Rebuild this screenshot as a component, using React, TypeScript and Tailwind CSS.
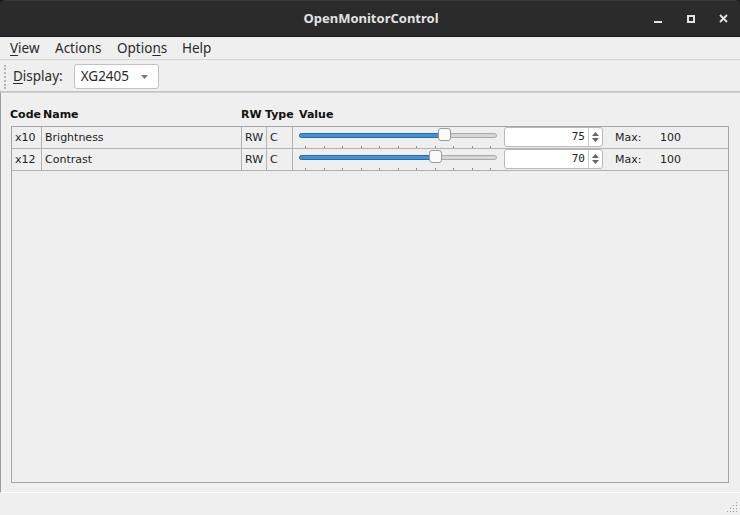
import React from "react";

interface Control {
  code: string;
  name: string;
  rw: string;
  type: string;
  value: number;
  max: number;
}

const controls: Control[] = [
  { code: "x10", name: "Brightness", rw: "RW", type: "C", value: 75, max: 100 },
  { code: "x12", name: "Contrast", rw: "RW", type: "C", value: 70, max: 100 },
];

const ui = { fontFamily: '"Noto Sans", "DejaVu Sans", sans-serif' };
const table = { fontFamily: '"DejaVu Sans", "Noto Sans", sans-serif' };

const Slider = ({ value, max }: { value: number; max: number }) => {
  const left = Math.round((value / max) * 185);
  return (
    <div className="relative w-[198px] h-[21px] shrink-0">
      <div className="absolute left-0 right-0 top-[6px] h-[5px] rounded-full bg-[#d6d6d6] border border-[#aaaaaa]" />
      <div
        className="absolute left-0 top-[6px] h-[5px] rounded-full bg-[#3d93dc] border border-[#2a6aa8]"
        style={{ width: left + 7 }}
      />
      <div
        className="absolute top-[1px] w-[13px] h-[13px] rounded-[3px] bg-[#fbfbfb] border border-[#9a9a9a]"
        style={{ left }}
      />
      {Array.from({ length: 11 }).map((_, i) => (
        <div
          key={i}
          className="absolute top-[19px] w-px h-[2px] bg-[#8c8c8c]"
          style={{ left: Math.round(6 + i * 18.5) }}
        />
      ))}
    </div>
  );
};

const SpinBox = ({ value }: { value: number }) => (
  <div className="flex w-[99px] h-[20px] shrink-0 rounded-[3px] bg-white border border-[#b9b9b9]">
    <div
      className="flex-1 flex items-center justify-end pr-[3px] pt-px text-[11px] text-[#222]"
      style={{ fontFamily: '"DejaVu Sans Mono", monospace' }}
    >
      {value}
    </div>
    <div className="w-[14px] flex flex-col items-center justify-center gap-[2px] border-l border-[#c8c8c8]">
      <svg width="7" height="4" viewBox="0 0 7 4">
        <path d="M0 4 L3.5 0 L7 4 Z" fill="#666" />
      </svg>
      <svg width="7" height="4" viewBox="0 0 7 4">
        <path d="M0 0 L3.5 4 L7 0 Z" fill="#666" />
      </svg>
    </div>
  </div>
);

export default function App() {
  return (
    <div className="w-[740px] h-[515px] bg-[#1c1c1c] flex flex-col overflow-hidden" style={ui}>
      {/* title bar */}
      <div className="h-[37px] shrink-0 rounded-t-[6px] bg-[#2b2b2b] border-t border-[#3a3a3a] border-b border-b-[#1e1e1e] relative flex items-center justify-center">
        <span className="text-[13px] font-bold text-[#e2e2e2] pl-[2px]">OpenMonitorControl</span>
        <div className="absolute right-0 top-0 h-full flex items-center">
          <div className="w-[33px] flex justify-center pt-[6px]">
            <div className="w-[8px] h-[2px] bg-[#e4e4e4]" />
          </div>
          <div className="w-[33px] flex justify-center">
            <div className="w-[8px] h-[8px] border-2 border-[#e4e4e4]" />
          </div>
          <div className="w-[33px] flex justify-center">
            <svg width="9" height="9" viewBox="0 0 9 9">
              <path d="M1 1 L8 8 M8 1 L1 8" stroke="#e4e4e4" strokeWidth="1.8" />
            </svg>
          </div>
        </div>
      </div>

      <div className="flex-1 flex flex-col bg-[#efefef] text-[#2a2a2a]">
        {/* menu bar */}
        <div className="h-[23px] shrink-0 flex items-center pl-[10px] text-[13.5px] border-b border-[#d6d6d6]">
          <span className="w-[45px]">
            <span className="underline underline-offset-2">V</span>iew
          </span>
          <span className="w-[62px]">Actions</span>
          <span className="w-[65px]">
            Optio<span className="underline underline-offset-2">n</span>s
          </span>
          <span>Help</span>
        </div>

        {/* toolbar */}
        <div className="h-[32px] shrink-0 flex items-center pt-[2px] border-b border-[#c4c4c4]">
          <div className="ml-[4px] w-[3px] h-[24px] border-l-2 border-dotted border-[#b4b4b4]" />
          <span className="ml-[6px] text-[13.5px]">
            <span className="underline underline-offset-2">D</span>isplay:
          </span>
          <div className="ml-[11px] w-[85px] h-[25px] rounded-[3px] bg-white border border-[#c2c2c2] flex items-center pl-[6px] pr-[10px] text-[13.5px]">
            <span className="flex-1">XG2405</span>
            <svg width="7" height="4" viewBox="0 0 7 4">
              <path d="M0 0 L3.5 4 L7 0 Z" fill="#777" />
            </svg>
          </div>
        </div>

        {/* main */}
        <div className="h-[401px] shrink-0 flex flex-col border-t border-[#d0d0d0] border-l border-l-[#9c9c9c] border-b border-b-white pl-[10px] pr-[11px] pb-[9px]" style={table}>
          <div className="h-[33px] shrink-0 flex items-end pb-[3px] -ml-px text-[11px] font-bold text-[#111]">
            <span className="w-[33px]">Code</span>
            <span className="w-[198px]">Name</span>
            <span className="w-[24px]">RW</span>
            <span className="w-[34px]">Type</span>
            <span>Value</span>
          </div>

          <div className="flex-1 border border-[#a4a4a4] flex flex-col text-[11px] text-[#1e1e1e]">
            {controls.map((c) => (
              <div key={c.code} className="h-[22px] flex border-b border-[#b2b2b2]">
                <div className="w-[30px] border-r border-[#b2b2b2] pl-[3px] pt-px flex items-center">{c.code}</div>
                <div className="w-[200px] border-r border-[#b2b2b2] pl-[3px] pt-px flex items-center">{c.name}</div>
                <div className="w-[25px] border-r border-[#b2b2b2] pl-[3px] pt-px flex items-center">{c.rw}</div>
                <div className="w-[26px] border-r border-[#b2b2b2] pl-[3px] pt-px flex items-center">{c.type}</div>
                <div className="flex-1 flex items-start pl-[6px]">
                  <Slider value={c.value} max={c.max} />
                  <div className="ml-[7px]">
                    <SpinBox value={c.value} />
                  </div>
                  <span className="ml-[12px] h-[21px] pt-px flex items-center w-[45px]">Max:</span>
                  <span className="h-[21px] pt-px flex items-center">{c.max}</span>
                </div>
              </div>
            ))}
          </div>
        </div>

        {/* status bar */}
        <div className="flex-1 flex justify-end items-end pr-[2px] pb-[2px]">
          <svg width="12" height="12" viewBox="0 0 12 12">
            {[
              [10, 2],
              [10, 5],
              [7, 5],
              [10, 8],
              [7, 8],
              [4, 8],
              [10, 11],
              [7, 11],
              [4, 11],
              [1, 11],
            ].map(([x, y], i) => (
              <rect key={i} x={x} y={y - 1} width="1" height="1" fill="#9a9a9a" />
            ))}
          </svg>
        </div>
      </div>
    </div>
  );
}
